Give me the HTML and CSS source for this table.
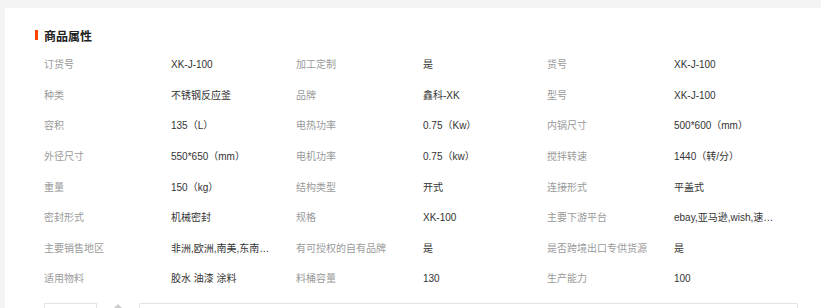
FILE: index.html
```html
<!DOCTYPE html>
<html lang="zh-CN">
<head>
<meta charset="utf-8">
<title>商品属性</title>
<link rel="stylesheet" href="styles.css">
</head>
<body>
<div class="page">
  <div class="panel">
    <h2 class="title"><span class="bar"></span>商品属性</h2>
    <div class="attrs">
      <div class="k">订货号</div><div class="v">XK-J-100</div>
      <div class="k">加工定制</div><div class="v">是</div>
      <div class="k">货号</div><div class="v">XK-J-100</div>

      <div class="k">种类</div><div class="v">不锈钢反应釜</div>
      <div class="k">品牌</div><div class="v">鑫科-XK</div>
      <div class="k">型号</div><div class="v">XK-J-100</div>

      <div class="k">容积</div><div class="v">135（L）</div>
      <div class="k">电热功率</div><div class="v">0.75（Kw）</div>
      <div class="k">内锅尺寸</div><div class="v">500*600（mm）</div>

      <div class="k">外径尺寸</div><div class="v">550*650（mm）</div>
      <div class="k">电机功率</div><div class="v">0.75（kw）</div>
      <div class="k">搅拌转速</div><div class="v">1440（转/分）</div>

      <div class="k">重量</div><div class="v">150（kg）</div>
      <div class="k">结构类型</div><div class="v">开式</div>
      <div class="k">连接形式</div><div class="v">平盖式</div>

      <div class="k">密封形式</div><div class="v">机械密封</div>
      <div class="k">规格</div><div class="v">XK-100</div>
      <div class="k">主要下游平台</div><div class="v">ebay,亚马逊,wish,速卖通,独立站</div>

      <div class="k">主要销售地区</div><div class="v">非洲,欧洲,南美,东南亚,北美</div>
      <div class="k">有可授权的自有品牌</div><div class="v">是</div>
      <div class="k">是否跨境出口专供货源</div><div class="v">是</div>

      <div class="k">适用物料</div><div class="v">胶水 油漆 涂料</div>
      <div class="k">料桶容量</div><div class="v">130</div>
      <div class="k">生产能力</div><div class="v">100</div>
    </div>
    <div class="bottom">
      <div class="box small"></div>
      <svg class="tip" width="10" height="5" viewBox="0 0 10 5"><path d="M1 5 L5 1 L9 5" fill="#ccc"/></svg>
      <div class="box wide"></div>
    </div>
  </div>
</div>
</body>
</html>
```

FILE: styles.css
```css
html, body {
  margin: 0;
  padding: 0;
  height: 308px;
  overflow: hidden;
  background: #f4f4f4;
}
body {
  font-family: "Liberation Sans", "Noto Sans CJK SC", sans-serif;
  font-size: 10px;
  color: #333;
}
.page {
  padding: 8px 0 0 5px;
}
.panel {
  background: #fff;
  padding: 19px 0 0 30px;
  height: 300px;
  box-sizing: border-box;
}
.title {
  margin: 0;
  display: flex;
  align-items: center;
  height: 16px;
  font-family: "Noto Sans CJK SC", sans-serif;
  font-size: 12px;
  font-weight: bold;
  color: #222;
}
.bar {
  width: 3px;
  height: 10px;
  background: #f40;
  margin-right: 6px;
}
.attrs {
  margin: 7px 0 0 9px;
  display: grid;
  grid-template-columns: 127px 125px 127px 124px 127px 125px;
  grid-auto-rows: 30.6px;
  align-items: center;
}
.k, .v {
  max-width: 101px;
  white-space: nowrap;
  overflow: hidden;
  text-overflow: ellipsis;
  line-height: 14px;
}
.k {
  color: #9a9a9a;
}
.v {
  color: #333;
}
.bottom {
  margin: 8px 0 0 9px;
  display: flex;
  align-items: flex-start;
}
.box {
  height: 5px;
  border: 1px solid #e3e3e3;
  border-bottom: 0;
  box-sizing: border-box;
}
.small {
  width: 53px;
}
.tip {
  margin: 0 16px 0 16px;
}
.wide {
  width: 659px;
  border-radius: 2px 2px 0 0;
}
```
